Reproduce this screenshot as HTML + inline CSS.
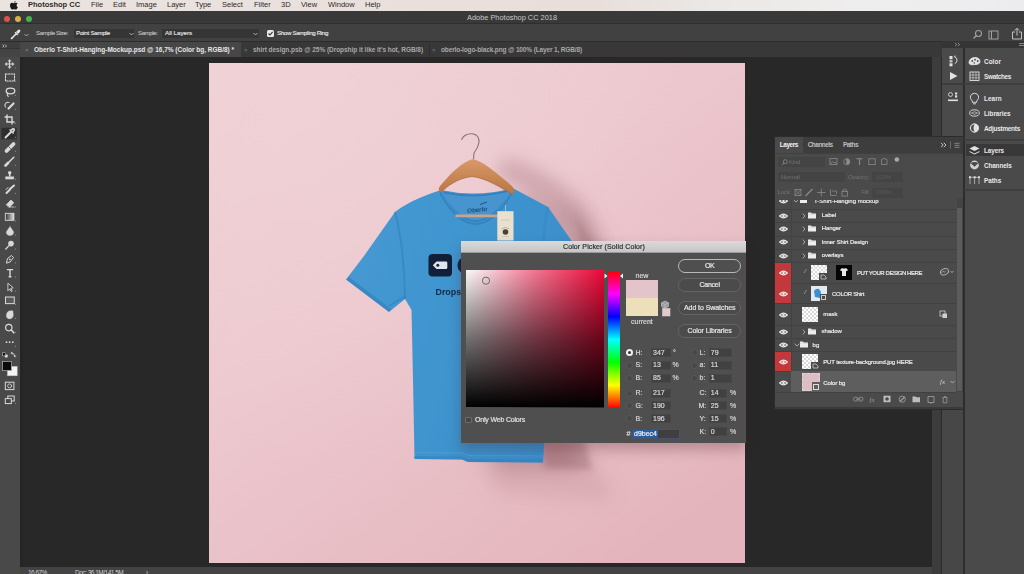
<!DOCTYPE html>
<html><head><meta charset="utf-8">
<style>
*{box-sizing:border-box}
html,body{margin:0;padding:0}
body{width:1024px;height:574px;overflow:hidden;position:relative;background:#282828;font-family:"Liberation Sans",sans-serif;color:#ddd}
.a{position:absolute}
.t{position:absolute;white-space:nowrap;line-height:1}
.dlg .t{-webkit-text-stroke:0.2px currentColor}
#menubar{left:0;top:0;width:1024px;height:11px;background:linear-gradient(90deg,#ebe3df 0%,#e8dfdb 58%,#ebe8e5 70%,#efeeee 84%,#ececee 100%)}
#menubar .t{color:#2a2a2a;font-size:7.5px;top:1px}
#titlebar{left:0;top:11px;width:1024px;height:12px;background:#393939}
#optbar{left:0;top:23px;width:1024px;height:18px;background:#414141;border-top:1px solid #2e2e2e}
#tabbar{left:20px;top:41px;width:1004px;height:16px;background:#383838;border-top:1px solid #2c2c2c}
#toolhead{left:0;top:41px;width:20px;height:16px;background:#3e3e3e;border-top:1px solid #2c2c2c}
#toolbar{left:0;top:57px;width:20px;height:517px;background:#494949}
#tbshadow{left:20px;top:57px;width:3px;height:510px;background:#252525}
#status{left:20px;top:567px;width:912px;height:7px;background:#434343}
#doc{left:209px;top:63px;width:536px;height:500px;background:linear-gradient(180deg,#eed2d6 0%,#eccdd2 40%,#e9c1c8 100%)}
#vstrip{left:932px;top:57px;width:10px;height:517px;background:#3c3c3c;border-right:1px solid #2a2a2a}
#dockcol{left:942px;top:48px;width:21px;height:526px;background:#474747}
#dockpanel{left:964px;top:48px;width:60px;height:526px;background:#4a4a4a;border-left:1px solid #2e2e2e}
#docktop{left:942px;top:41px;width:82px;height:7px;background:#353535}
</style></head>
<body>
<div id="menubar" class="a">
  <svg class="a" style="left:10px;top:1px" width="8" height="9" viewBox="0 0 8 9"><path d="M4 2.2 C3.3 2.2 2.8 1.8 2 1.8 C0.8 1.8 0 2.9 0 4.4 C0 6.4 1.3 8.6 2.3 8.6 C2.9 8.6 3.2 8.2 4 8.2 C4.8 8.2 5.1 8.6 5.7 8.6 C6.6 8.6 7.4 7.2 7.8 6.2 C6.9 5.8 6.5 4.9 6.6 4.1 C6.7 3.3 7.1 2.8 7.6 2.5 C7.1 1.9 6.4 1.8 6 1.8 C5.2 1.8 4.7 2.2 4 2.2 Z M4 1.8 C4 0.9 4.7 0.2 5.5 0 C5.6 0.9 4.9 1.7 4 1.8 Z" fill="#1a1a1a"/></svg>
  <div class="t" style="left:28px;font-weight:bold">Photoshop CC</div>
  <div class="t" style="left:91px">File</div>
  <div class="t" style="left:113px">Edit</div>
  <div class="t" style="left:136px">Image</div>
  <div class="t" style="left:167px">Layer</div>
  <div class="t" style="left:195px">Type</div>
  <div class="t" style="left:222px">Select</div>
  <div class="t" style="left:254px">Filter</div>
  <div class="t" style="left:281px">3D</div>
  <div class="t" style="left:301px">View</div>
  <div class="t" style="left:328px">Window</div>
  <div class="t" style="left:365px">Help</div>
</div>
<div id="titlebar" class="a">
  <div class="a" style="left:4px;top:4.5px;width:6px;height:6px;border-radius:50%;background:#d9534c"></div>
  <div class="a" style="left:15px;top:4.5px;width:6px;height:6px;border-radius:50%;background:#dcb246"></div>
  <div class="a" style="left:25.5px;top:4.5px;width:6px;height:6px;border-radius:50%;background:#43b54c"></div>
  <div class="t" style="left:467px;top:3px;font-size:7.4px;color:#c8c8c8">Adobe Photoshop CC 2018</div>
</div>
<div id="optbar" class="a">
  <svg class="a" style="left:10px;top:5px" width="11" height="11" viewBox="0 0 11 11"><path d="M1.5 9.5 L6.5 4.5" stroke="#e6e6e6" stroke-width="1.6" fill="none"/><path d="M1 10 L2.5 8.5" stroke="#e6e6e6" stroke-width="1.2"/><path d="M6 3 L8 1 Q9.5 0 10.3 1.5 Q10.5 2.5 9 4 L8 5 Z" fill="#e6e6e6"/><path d="M5 3.2 L7.8 6" stroke="#e6e6e6" stroke-width="1.2"/></svg>
  <svg class="a" style="left:24px;top:9px" width="5" height="4" viewBox="0 0 5 4"><path d="M0.5 1 L2.5 3 L4.5 1" stroke="#bbb" stroke-width="0.8" fill="none"/></svg>
  <div class="t" style="left:36px;top:5.5px;font-size:6.2px;color:#bdbdbd;letter-spacing:-0.377px;-webkit-text-stroke:0.15px #bdbdbd">Sample Size:</div>
  <div class="a" style="left:74px;top:5px;width:60px;height:9px;background:#353535"></div>
  <div class="t" style="left:76px;top:5.5px;font-size:6.2px;color:#e6e6e6;letter-spacing:-0.24px;-webkit-text-stroke:0.15px #e6e6e6">Point Sample</div>
  <svg class="a" style="left:129px;top:8px" width="5" height="4" viewBox="0 0 5 4"><path d="M0.5 1 L2.5 3 L4.5 1" stroke="#ccc" stroke-width="0.8" fill="none"/></svg>
  <div class="t" style="left:138px;top:5.5px;font-size:6.2px;color:#bdbdbd;letter-spacing:-0.5px;-webkit-text-stroke:0.15px #bdbdbd">Sample:</div>
  <div class="a" style="left:162px;top:5px;width:97px;height:9px;background:#353535"></div>
  <div class="t" style="left:165px;top:5.5px;font-size:6.2px;color:#e6e6e6;-webkit-text-stroke:0.15px #e6e6e6">All Layers</div>
  <svg class="a" style="left:253px;top:8px" width="5" height="4" viewBox="0 0 5 4"><path d="M0.5 1 L2.5 3 L4.5 1" stroke="#ccc" stroke-width="0.8" fill="none"/></svg>
  <div class="a" style="left:267px;top:6px;width:7px;height:7px;background:#e8e8e8;border-radius:1.5px"></div>
  <svg class="a" style="left:267px;top:6px" width="7" height="7" viewBox="0 0 7 7"><path d="M1.5 3.5 L3 5 L5.6 1.8" stroke="#333" stroke-width="1.1" fill="none"/></svg>
  <div class="t" style="left:277px;top:5.5px;font-size:6.2px;color:#e6e6e6;letter-spacing:-0.36px;-webkit-text-stroke:0.15px #e6e6e6">Show Sampling Ring</div>
  <svg class="a" style="left:972px;top:5px" width="11" height="11" viewBox="0 0 11 11"><circle cx="6.5" cy="4.5" r="3" stroke="#a0a0a0" stroke-width="1.1" fill="none"/><path d="M4.3 6.7 L1.5 9.5" stroke="#a0a0a0" stroke-width="1.3"/></svg>
  <svg class="a" style="left:988px;top:6px" width="11" height="10" viewBox="0 0 11 10"><rect x="1" y="1" width="9" height="8" stroke="#a0a0a0" stroke-width="1" fill="none"/><path d="M3.5 1 V9" stroke="#a0a0a0" stroke-width="1"/></svg>
  <svg class="a" style="left:1011px;top:3px" width="12" height="13" viewBox="0 0 12 13"><path d="M4 5 H1.5 V12 H10.5 V5 H8" stroke="#c0c0c0" stroke-width="1" fill="none"/><path d="M6 8.5 V1.5 M3.8 3.5 L6 1.2 L8.2 3.5" stroke="#c0c0c0" stroke-width="1" fill="none"/></svg>
</div>
<div id="toolhead" class="a"><div class="a" style="left:0;top:6px;width:20px;height:10px;background:#444"></div><div class="a" style="left:0;top:5.5px;width:20px;height:0.8px;background:#333"></div><svg class="a" style="left:1.5px;top:1.5px" width="6" height="4" viewBox="0 0 6 4"><path d="M0.6 0.5 L2 2 L0.6 3.5 M3 0.5 L4.4 2 L3 3.5" stroke="#d0d0d0" stroke-width="0.8" fill="none"/></svg></div>
<div id="tabbar" class="a">
  <div class="a" style="left:0;top:0;width:220.5px;height:15px;background:#474747"></div>
  <div class="t" style="left:5px;top:4.5px;font-size:6px;color:#888">&#215;</div>
  <div class="t" style="left:14px;top:4.5px;font-size:6.5px;font-weight:bold;color:#e8e8e8;letter-spacing:-0.01px">Oberlo T-Shirt-Hanging-Mockup.psd @ 16,7% (Color bg, RGB/8) *</div>
  <div class="t" style="left:224px;top:4.5px;font-size:6px;color:#777">&#215;</div>
  <div class="t" style="left:233px;top:4.5px;font-size:6.5px;color:#a8a8a8;font-weight:bold;letter-spacing:-0.045px">shirt design.psb @ 25% (Dropship it like it's hot, RGB/8)</div>
  <div class="a" style="left:409px;top:2px;width:1px;height:11px;background:#2d2d2d"></div>
  <div class="t" style="left:412px;top:4.5px;font-size:6px;color:#777">&#215;</div>
  <div class="t" style="left:421px;top:4.5px;font-size:6.5px;color:#a8a8a8;font-weight:bold;letter-spacing:-0.138px">oberlo-logo-black.png @ 100% (Layer 1, RGB/8)</div>
</div>
<div id="toolbar" class="a"></div>
<svg class="a" style="left:0;top:0" width="24" height="420" viewBox="0 0 24 420">
<g stroke="#d9d9d9" fill="none" stroke-width="1.1" stroke-linecap="round">
 <path d="M6 64 H13 M9.5 60.5 V67.5" stroke-width="1.2"/>
 <path d="M5 64 L6.8 62.6 V65.4Z M14 64 L12.2 62.6 V65.4Z M9.5 59.5 L8.1 61.3 H10.9Z M9.5 68.5 L8.1 66.7 H10.9Z" fill="#d9d9d9" stroke-width="0.4"/>
 <rect x="5.5" y="74" width="9" height="7" stroke-dasharray="1.6 1.2"/>
 <ellipse cx="10.5" cy="91" rx="4.3" ry="2.8" stroke-width="1.3"/>
 <path d="M7.5 93 Q6.5 95 8.3 96.5" stroke-width="1.1"/>
 <path d="M5.5 107 A3 3 0 0 1 9 102.5" stroke-dasharray="1 0.8"/>
 <path d="M8.5 108.5 L13.5 103.5" stroke-width="2.2"/>
 <path d="M7 114.5 V122 H14.5 M4.5 117 H12 V124.5" stroke-width="1.4" stroke-linecap="butt"/>
</g>
<rect x="1.5" y="127.8" width="15.2" height="11.5" fill="#2e2e2e"/>
<g stroke="#d9d9d9" fill="none" stroke-linecap="round">
 <path d="M5.5 137.5 L11.5 131.5" stroke-width="2"/>
 <path d="M11 130 L13 128.8 Q14.3 128.6 14.3 129.9 L13 132" stroke-width="1.6"/>
 <path d="M9.8 129.8 L13.3 133.3" stroke-width="1.2"/>
 <path d="M6.5 151 L13.5 144" stroke-width="3.8"/>
 <path d="M8.5 146.5 L11 149" stroke="#474747" stroke-width="0.7"/>
 <path d="M6 165 L13.8 157.2" stroke-width="1.5"/>
 <path d="M5.5 165.5 L8 163" stroke-width="2.6"/>
 <circle cx="9.7" cy="172.8" r="1.7" fill="#d9d9d9" stroke="none"/>
 <path d="M9.7 174 V176" stroke-width="1.6"/>
 <path d="M5.8 176.8 H13.7 V179 H5.8Z" fill="#d9d9d9" stroke-width="0.6"/>
 <path d="M6.5 193 L10 189.5 M10 189 L14 185.5" stroke-width="2"/>
 <path d="M6 189.5 L8 187.5" stroke-width="1"/>
 <path d="M6.5 204.5 L11 200 L13.8 202.8 L9.3 207.3Z" fill="#d9d9d9" stroke-width="0.8"/>
 <path d="M10 207 H14" stroke-width="0.8"/>
</g>
<defs><linearGradient id="gt" x1="0" x2="1"><stop offset="0" stop-color="#333"/><stop offset="1" stop-color="#e0e0e0"/></linearGradient></defs>
<rect x="5.3" y="213.3" width="8.6" height="7" fill="url(#gt)" stroke="#d9d9d9" stroke-width="0.9"/>
<g stroke="#d9d9d9" fill="none" stroke-linecap="round">
 <path d="M10 226.8 Q13.6 231.3 13.6 232.3 A3.6 3.1 0 0 1 6.4 232.3 Q6.4 231.3 10 226.8Z" fill="#d9d9d9" stroke-width="0.5"/>
 <circle cx="11" cy="243.6" r="2.8" fill="#d9d9d9" stroke="none"/>
 <path d="M9 245.6 L5.8 249" stroke-width="1.3"/>
 <path d="M6.5 262.8 L7.5 258.5 L11.5 255.5 L13.5 257.5 L10.5 261.5Z" stroke-width="1"/>
 <circle cx="9.8" cy="259.3" r="0.9" fill="#d9d9d9" stroke="none"/>
 <path d="M6.8 269.6 H13.2 M10 269.6 V276.8 M8.6 276.8 H11.4" stroke-width="1.4" stroke-linecap="butt"/>
 <path d="M8.2 283.5 L13.2 287.8 L10.8 288.3 L12.2 291 L11.2 291.5 L9.8 288.8 L8.2 290.5Z" fill="#3a3a3a" stroke-width="0.9"/>
 <rect x="5.5" y="297" width="8.8" height="6.6" fill="#5a5a5a" stroke-width="1"/>
 <path d="M6.5 317 Q6 313 8.5 311.3 Q10 310.3 11 311 L12 310.5 Q13.6 311 13 312.8 Q14 315 12.5 317.5 Q10.5 319.5 8 318.6Z" fill="#d9d9d9" stroke-width="0.4"/>
 <circle cx="8.8" cy="327.6" r="3.2" stroke-width="1.2"/>
 <path d="M11.2 330 L13.8 332.8" stroke-width="1.6"/>
 <circle cx="6.5" cy="342.2" r="0.9" fill="#d9d9d9" stroke="none"/>
 <circle cx="9.6" cy="342.2" r="0.9" fill="#d9d9d9" stroke="none"/>
 <circle cx="12.8" cy="342.2" r="0.9" fill="#d9d9d9" stroke="none"/>
 <rect x="4.8" y="354.6" width="2.8" height="2.8" fill="#e8e8e8" stroke="none"/>
 <rect x="2.6" y="352.8" width="3" height="3" fill="#111" stroke="#ccc" stroke-width="0.5"/>
 <path d="M11.5 353 Q14.8 353 14.8 356.3" stroke-width="0.8"/>
 <path d="M11 353 L12.3 352 V354Z M14.8 357 L13.8 355.7 H15.8Z" fill="#d9d9d9" stroke-width="0.3"/>
 <rect x="7.4" y="366.4" width="9.8" height="9.4" fill="#f4f4f4" stroke="#bbb" stroke-width="0.5"/>
 <rect x="2.6" y="361.4" width="9" height="9.2" fill="#0a0a0a" stroke="#c8c8c8" stroke-width="0.6"/>
 <rect x="5.3" y="382.2" width="8.6" height="7.4" stroke-width="1"/>
 <circle cx="9.6" cy="385.9" r="2" stroke-width="0.8"/>
 <rect x="7.8" y="396" width="6.4" height="5" stroke-width="1"/>
 <rect x="5.3" y="398.6" width="6" height="5" fill="#474747" stroke-width="1"/>
</g>
<g fill="#8a8a8a">
 <path d="M16 68.5 L14.5 68.5 L16 67Z M16 82 L14.5 82 L16 80.5Z M16 96 L14.5 96 L16 94.5Z M16 110 L14.5 110 L16 108.5Z M16 124 L14.5 124 L16 122.5Z M16 138 L14.5 138 L16 136.5Z M16 152 L14.5 152 L16 150.5Z M16 166 L14.5 166 L16 164.5Z M16 180 L14.5 180 L16 178.5Z M16 194 L14.5 194 L16 192.5Z M16 207.5 L14.5 207.5 L16 206Z M16 221.5 L14.5 221.5 L16 220Z M16 235.5 L14.5 235.5 L16 234Z M16 249.5 L14.5 249.5 L16 248Z M16 263.5 L14.5 263.5 L16 262Z M16 277.5 L14.5 277.5 L16 276Z M16 291.5 L14.5 291.5 L16 290Z M16 305 L14.5 305 L16 303.5Z M16 319 L14.5 319 L16 317.5Z M16 333 L14.5 333 L16 331.5Z M16 347 L14.5 347 L16 345.5Z M16 404 L14.5 404 L16 402.5Z"/>
</g>
</svg>
<div id="tbshadow" class="a"></div>
<div id="status" class="a"></div>
<div class="a" style="left:20px;top:567px;width:912px;height:7px;overflow:hidden">
 <div class="t" style="left:8px;top:3.3px;font-size:6.5px;color:#d0d0d0;letter-spacing:-0.55px">16,67%</div>
 <div class="t" style="left:55px;top:3.3px;font-size:6.5px;color:#d0d0d0;letter-spacing:-0.5px">Doc: 36,1M/141,5M</div>
 <div class="t" style="left:126px;top:3.3px;font-size:6.5px;color:#d0d0d0">&#8250;</div>
</div>
<div id="doc" class="a"></div>
<svg class="a" style="left:209px;top:63px" width="536" height="500" viewBox="209 63 536 500">
<defs>
 <linearGradient id="pk" x1="0" y1="0" x2="0.8" y2="1">
  <stop offset="0" stop-color="#efd0d5"/>
  <stop offset="0.45" stop-color="#ecc8ce"/>
  <stop offset="1" stop-color="#e4b4bc"/>
 </linearGradient>
 <radialGradient id="pkhl" cx="0.2" cy="0.1" r="0.7">
  <stop offset="0" stop-color="#f0d5d9" stop-opacity="0.5"/>
  <stop offset="1" stop-color="#f0d5d9" stop-opacity="0"/>
 </radialGradient>
 <filter id="blur8" x="-50%" y="-50%" width="200%" height="200%"><feGaussianBlur stdDeviation="9"/></filter>
 <filter id="blur3" x="-50%" y="-50%" width="200%" height="200%"><feGaussianBlur stdDeviation="3"/></filter>
 <filter id="blur1" x="-20%" y="-20%" width="140%" height="140%"><feGaussianBlur stdDeviation="0.6"/></filter>
 <linearGradient id="shirtg" x1="0" y1="0" x2="1" y2="0.3">
  <stop offset="0" stop-color="#4699d3"/>
  <stop offset="0.5" stop-color="#4095cf"/>
  <stop offset="1" stop-color="#398dca"/>
 </linearGradient>
 <linearGradient id="woodg" x1="0" y1="0" x2="0" y2="1">
  <stop offset="0" stop-color="#d9996a"/>
  <stop offset="1" stop-color="#b97542"/>
 </linearGradient>
</defs>
<rect x="209" y="63" width="536" height="500" fill="url(#pk)"/>
<rect x="209" y="63" width="536" height="500" fill="url(#pkhl)"/>
<!-- shadows -->
<g filter="url(#blur8)" fill="#a06e77">
 <path d="M525 192 L578 212 L615 285 L600 320 L578 320 L576 470 L500 472 L440 300 Z" opacity="0.42"/>
 <path d="M470 455 L590 450 L615 500 L500 495 Z" opacity="0.18"/>
</g>
<g filter="url(#blur8)">
 <path d="M500 168 Q545 180 575 212 Q598 240 606 300" stroke="#a06e77" stroke-width="22" fill="none" opacity="0.4"/>
</g>
<g filter="url(#blur3)" fill="#8c5a64">
 <path d="M540 440 L585 440 L592 470 L545 468 Z" opacity="0.35"/>
 <path d="M575 215 L600 250 L612 290 L590 300 Z" opacity="0.25"/>
</g>
<!-- shirt -->
<g filter="url(#blur1)">
<path d="M441 190 Q410 200 395 212 Q378 236 364 256 L346 279.5 L389 312 L405 299 L411.5 310 L413 380 L414.5 459 L462 459.5 L468 462 L543 462.5 L547 400 L560 300 L600 290 L571 240 L548 207 L512.6 188 Q477 198 441 190 Z" fill="url(#shirtg)"/>
<path d="M443 191.5 Q477 199 511 189.5 L511 193 Q476 250 443 195Z" fill="#4794cf"/>
<path d="M444 192.5 Q477 199.5 510 190.5" stroke="#2f7fbd" stroke-width="1.4" fill="none"/>
<path d="M440.5 191 Q476 250 512.5 189 L513 193 Q476 256 440 195Z" fill="#3383c0"/>
<path d="M442 194.5 Q476 252 511 192.5" stroke="#5aa5da" stroke-width="0.6" fill="none" opacity="0.7"/>
<path d="M346 279.5 L389 312 L391 309 L349 277Z" fill="#2a76b1" opacity="0.45"/>
<path d="M414.5 459 L462 459.5 L468 462 L543 462.5 L543 459.5 L468 459 L462 456.5 L414.5 456Z" fill="#2f7fbd" opacity="0.5"/>
<path d="M415 452.5 L462 453 L468 455.5 L543 456" stroke="#5aa6dc" stroke-width="0.8" fill="none" opacity="0.6"/>
<path d="M395 212 Q404 245 405 299" stroke="#3080bd" stroke-width="2" fill="none" opacity="0.55"/>
<path d="M389 306 Q398 300 406 296" stroke="#2f7ebb" stroke-width="1.5" fill="none" opacity="0.6"/>
<path d="M548 207 Q540 240 545 300" stroke="#3384c2" stroke-width="3" fill="none" opacity="0.35"/>
</g>
<!-- inner neck label + hanger bar -->
<path d="M455.5 215.9 L497.5 215.9" stroke="#c9a38c" stroke-width="2.6"/>
<text x="467" y="212" font-family="Liberation Sans" font-style="italic" font-weight="bold" font-size="6.2" fill="#1d4c78" transform="rotate(-6 476 209)">Oberlo</text>
<path d="M480 204.5 Q484 203 487 202" stroke="#1d4c78" stroke-width="0.9" fill="none"/>
<!-- hanger -->
<path d="M461.5 139.8 Q464 133.5 472.5 133.8 Q479.5 135 479 142.5 Q478 148 474 153 L473.5 159" stroke="#847670" stroke-width="1.1" fill="none"/>
<path d="M440 186 C452 172 462 162 473 159 C484 162 495 172 512 186 Q516 191 512.6 194.5 C500 187 486 178 472 176.5 C458 178 447 186 441 192.5 Q437 190 440 186Z" fill="url(#woodg)"/>
<path d="M441 192.5 C447 186 458 178 472 176.5 C486 178 500 187 512.6 194.5" stroke="#a5653a" stroke-width="1" fill="none" opacity="0.7"/>
<!-- tag -->
<path d="M505.5 205 L505.5 212" stroke="#e0e0e0" stroke-width="0.5"/>
<rect x="497.3" y="211.2" width="16.2" height="29.3" fill="#e9e1cd"/>
<circle cx="505.5" cy="232" r="2.8" fill="#4a4038"/>
<path d="M501.5 229 Q505.5 226 509.5 229" stroke="#9a8f80" stroke-width="0.6" fill="none"/>
<path d="M501 220 H510 M502 236.5 H509" stroke="#c4b9a6" stroke-width="0.6"/>
<!-- logo -->
<rect x="428.5" y="254" width="23.5" height="22.5" rx="4" fill="#111f38"/>
<path d="M446 261.5 H436.5 L432.8 265.3 L436.5 269 H446 Q447.3 269 447.3 267.7 V262.8 Q447.3 261.5 446 261.5Z" fill="#dfe6ee"/>
<circle cx="437.8" cy="265.3" r="1.5" fill="#12233f"/>
<circle cx="466" cy="265.3" r="8.5" fill="#12233f"/>
<text x="435.5" y="295.3" font-family="Liberation Sans" font-weight="bold" font-size="8.9" fill="#12284a">Drops</text>
</svg>
<div id="vstrip" class="a"></div>
<div id="docktop" class="a"></div>
<div id="dockcol" class="a"></div>
<div id="dockpanel" class="a"></div>
<div class="a" style="left:942px;top:41px;width:82px;height:7px;background:#353535"></div><svg class="a" style="left:954px;top:42px" width="7" height="5" viewBox="0 0 7 5"><path d="M1 0.8 L2.8 2.5 L1 4.2 M3.8 0.8 L5.6 2.5 L3.8 4.2" stroke="#aaa" stroke-width="0.7" fill="none"/></svg><div class="a" style="left:1019px;top:43px;width:5px;height:3px;border-top:1px solid #888;border-bottom:1px solid #888"></div><div class="a" style="left:942px;top:48px;width:21px;height:35px;background:#4a4a4a"></div><div class="a" style="left:942px;top:83px;width:21px;height:2px;background:#3c3c3c"></div><div class="a" style="left:942px;top:85px;width:21px;height:51px;background:#4a4a4a"></div><svg class="a" style="left:942px;top:48px" width="21" height="60" viewBox="942 48 21 60">
<g fill="#e2e2e2">
<rect x="949.5" y="56" width="3" height="3.2"/><rect x="949.5" y="60" width="3" height="2.5" fill="#bdbdbd"/><rect x="949.5" y="63.3" width="3" height="3"/>
<path d="M954.5 57 Q957.5 57.5 957 61 Q956.5 63 954.8 63.5" fill="none" stroke="#e2e2e2" stroke-width="0.9"/>
<path d="M954 56 L955.8 55.5 L955 57.5Z"/>
<path d="M950 72 L957.5 76 L950 80Z"/>
<circle cx="950.5" cy="94.5" r="2" fill="none" stroke="#e2e2e2" stroke-width="0.8"/>
<rect x="955" y="92.5" width="2.2" height="2"/><rect x="955" y="95.3" width="2.2" height="2.2"/>
<rect x="948" y="99.5" width="10" height="1.6"/>
</g></svg><div class="a" style="left:963px;top:48px;width:1px;height:526px;background:#2e2e2e"></div><div class="a" style="left:964px;top:83.2px;width:60px;height:1.5px;background:#3e3e3e"></div><div class="a" style="left:964px;top:139.3px;width:60px;height:1.5px;background:#3e3e3e"></div><div class="a" style="left:964px;top:189.3px;width:60px;height:1.5px;background:#3e3e3e"></div><div class="a" style="left:966px;top:144px;width:58px;height:11.5px;background:#383838"></div><div class="t" style="left:984px;top:58.7px;font-size:6.4px;font-weight:bold;color:#e8e8e8;letter-spacing:0.05px">Color</div><div class="t" style="left:984px;top:73.7px;font-size:6.4px;font-weight:bold;color:#e8e8e8;letter-spacing:-0.30px">Swatches</div><div class="t" style="left:984px;top:95.7px;font-size:6.4px;font-weight:bold;color:#e8e8e8;letter-spacing:0.05px">Learn</div><div class="t" style="left:984px;top:110.7px;font-size:6.4px;font-weight:bold;color:#e8e8e8;letter-spacing:-0.05px">Libraries</div><div class="t" style="left:984px;top:125.7px;font-size:6.4px;font-weight:bold;color:#e8e8e8;letter-spacing:-0.25px">Adjustments</div><div class="t" style="left:984px;top:147.7px;font-size:6.4px;font-weight:bold;color:#e8e8e8;letter-spacing:-0.10px">Layers</div><div class="t" style="left:984px;top:162.7px;font-size:6.4px;font-weight:bold;color:#e8e8e8;letter-spacing:-0.15px">Channels</div><div class="t" style="left:984px;top:177.7px;font-size:6.4px;font-weight:bold;color:#e8e8e8;letter-spacing:-0.05px">Paths</div><svg class="a" style="left:964px;top:48px" width="20" height="140" viewBox="964 48 20 140">
<g fill="none" stroke="#e2e2e2" stroke-width="0.9">
<path d="M969 62.5 Q969.5 58 974.5 57.5 Q979.8 57.5 980 61.5 Q980 64.5 975 64.5 Q969 65.5 969 62.5Z" fill="#e2e2e2"/>
<circle cx="972.3" cy="61" r="0.9" fill="#4a4a4a" stroke="none"/><circle cx="975" cy="59.7" r="0.9" fill="#4a4a4a" stroke="none"/><circle cx="977.7" cy="61" r="0.9" fill="#4a4a4a" stroke="none"/><circle cx="974.3" cy="63" r="0.8" fill="#4a4a4a" stroke="none"/>
<rect x="970" y="72" width="9" height="8.5"/><path d="M973 72 V80.5 M976 72 V80.5 M970 75 H979 M970 77.8 H979" stroke-width="0.6"/>
<path d="M972.3 101 Q969.8 98.8 970.5 96 Q971.5 93.3 974.5 93.3 Q977.5 93.3 978.5 96 Q979.2 98.8 976.7 101 V102.3 H972.3Z"/><path d="M973 103.8 H976" />
<ellipse cx="974.5" cy="113" rx="4.8" ry="3.2"/><path d="M971.5 113 Q974.5 110.5 977.5 113 Q974.5 115.5 971.5 113" stroke-width="0.6"/>
<circle cx="974.5" cy="128" r="4.2" fill="#e2e2e2"/>
</g>
<path d="M974.5 124.5 A3.5 3.5 0 0 0 974.5 131.5 Q972.5 128 974.5 124.5Z" fill="#4a4a4a"/>
<g fill="#e2e2e2">
<path d="M969.5 148.5 L974.5 146 L979.5 148.5 L974.5 151Z"/>
<path d="M969.5 151 L974.5 153.5 L979.5 151 L979.5 152 L974.5 154.5 L969.5 152Z"/>
<circle cx="974.5" cy="165" r="4.4" fill="#cfcfcf"/>
<path d="M970.5 163 L974.5 166.8 L978.5 163 Q974.5 161 970.5 163Z" fill="#4a4a4a"/>
<rect x="969" y="176.3" width="2" height="2"/><rect x="973.6" y="176.3" width="2" height="2"/><rect x="978" y="176.3" width="2" height="2"/>
<path d="M970 178.3 L970 184 M974.6 178.3 L974.6 184 M979 178.3 L979 184 M971 177.3 H978" stroke="#e2e2e2" stroke-width="0.6"/>
</g></svg>
<!--LAYERS-->
<div class="a" style="left:0;top:0;width:1024px;height:574px"><div class="a" style="left:775px;top:136.5px;width:188px;height:272px;background:#4a4a4a;box-shadow:0 0 0 1px #2c2c2c"></div><div class="a" style="left:775px;top:136.5px;width:188px;height:16px;background:#3d3d3d"></div><div class="a" style="left:775px;top:136.5px;width:28px;height:16px;background:#4a4a4a"></div><div class="t" style="left:779.8px;top:141.8px;font-size:6.5px;font-weight:bold;color:#f0f0f0;letter-spacing:-0.49px">Layers</div><div class="t" style="left:807.7px;top:141.8px;font-size:6.5px;font-weight:bold;color:#bdbdbd;letter-spacing:-0.53px">Channels</div><div class="t" style="left:843px;top:141.8px;font-size:6.5px;font-weight:bold;color:#bdbdbd;letter-spacing:-0.54px">Paths</div><svg class="a" style="left:939px;top:141px" width="22" height="8" viewBox="0 0 22 8"><path d="M2 1.8 L4.2 4 L2 6.2 M4.8 1.8 L7 4 L4.8 6.2" stroke="#cfcfcf" stroke-width="0.9" fill="none"/><path d="M11.5 0.5 V7.5" stroke="#8a8a8a" stroke-width="0.6"/><path d="M15.5 2.3 H20.5 M15.5 4.3 H20.5 M15.5 6.3 H20.5" stroke="#b0b0b0" stroke-width="0.6"/></svg><div class="a" style="left:778px;top:157px;width:47px;height:10px;background:#444"></div><svg class="a" style="left:781px;top:158.5px" width="7" height="7" viewBox="0 0 7 7"><circle cx="4.3" cy="2.7" r="2" fill="none" stroke="#8a8a8a" stroke-width="0.8"/><path d="M3 4 L1 6" stroke="#8a8a8a" stroke-width="0.9"/></svg><div class="t" style="left:789px;top:158.7px;font-size:6px;color:#727272;letter-spacing:-0.25px;">Kind</div><svg class="a" style="left:828px;top:156px" width="74" height="12" viewBox="828 156 74 12">
<g stroke="#8a8a8a" fill="none" stroke-width="0.8">
<rect x="830" y="158.5" width="7" height="6"/><path d="M830.5 164 L832.5 161.5 L834 163 L835 162 L836.5 164" />
<circle cx="846.7" cy="161.7" r="3"/><path d="M846.7 158.7 A3 3 0 0 1 846.7 164.7Z" fill="#8a8a8a"/>
<path d="M856.5 158.7 H862.5 M859.5 158.7 V165" stroke-width="1.1"/>
<rect x="868.8" y="158.8" width="6.4" height="5.8"/>
<path d="M881.5 164.5 V159.5 L884 158.5 L887 159.5 V164.5Z"/>
</g>
<circle cx="896.9" cy="159.5" r="2.3" fill="#a8a8a8"/>
</svg><div class="a" style="left:778px;top:172px;width:67px;height:10px;background:#444"></div><div class="t" style="left:780.7px;top:173.7px;font-size:6px;color:#727272;letter-spacing:-0.05px;">Normal</div><div class="t" style="left:848px;top:173.7px;font-size:6px;color:#727272;letter-spacing:-0.06px;">Opacity:</div><div class="a" style="left:871.5px;top:172px;width:31px;height:10px;background:#444"></div><div class="t" style="left:876px;top:173.7px;font-size:6px;color:#5a5a5a;letter-spacing:-0.1px;">100%</div><div class="t" style="left:777.5px;top:189.2px;font-size:6px;color:#727272;letter-spacing:-0.07px;">Lock:</div><svg class="a" style="left:793px;top:187px" width="58" height="11" viewBox="793 187 58 11">
<g stroke="#8a8a8a" fill="none" stroke-width="0.8">
<rect x="795" y="189.5" width="6" height="6"/><path d="M795 189.5 L801 195.5 M801 189.5 L795 195.5"/>
<path d="M805.5 196 L812.5 189" stroke-width="1.2"/>
<path d="M817 192.5 H825.5 M821.3 188.5 V196.5"/>
<path d="M830.5 189.5 V195.5 H836.5 M832 191 H836.5 V194"/>
<rect x="842" y="191.5" width="5.6" height="4.6"/><path d="M843 191.5 V190 Q844.8 188 846.6 190 V191.5"/>
</g></svg><div class="t" style="left:861.3px;top:189.2px;font-size:6px;color:#727272;letter-spacing:-0.27px;">Fill:</div><div class="a" style="left:871.5px;top:187.5px;width:31px;height:10px;background:#444"></div><div class="t" style="left:876px;top:189.2px;font-size:6px;color:#5a5a5a;letter-spacing:-0.1px;">100%</div><div class="a" style="left:775px;top:152.5px;width:188px;height:1px;background:#404040"></div><div class="a" style="left:775px;top:208.5px;width:181px;height:1px;background:#414141"></div><div class="a" style="left:775px;top:222px;width:181px;height:1px;background:#414141"></div><div class="a" style="left:775px;top:235.5px;width:181px;height:1px;background:#414141"></div><div class="a" style="left:775px;top:248.5px;width:181px;height:1px;background:#414141"></div><div class="a" style="left:775px;top:262px;width:181px;height:1px;background:#414141"></div><div class="a" style="left:775px;top:282.5px;width:181px;height:1px;background:#414141"></div><div class="a" style="left:775px;top:303px;width:181px;height:1px;background:#414141"></div><div class="a" style="left:775px;top:325px;width:181px;height:1px;background:#414141"></div><div class="a" style="left:775px;top:337.5px;width:181px;height:1px;background:#414141"></div><div class="a" style="left:775px;top:351px;width:181px;height:1px;background:#414141"></div><div class="a" style="left:775px;top:370.8px;width:181px;height:1px;background:#414141"></div><div class="a" style="left:775px;top:392px;width:181px;height:1px;background:#414141"></div><div class="a" style="left:790.5px;top:200px;width:1px;height:192px;background:#434343"></div><div class="a" style="left:775px;top:262.5px;width:15.5px;height:40.5px;background:#c3393b"></div><div class="a" style="left:775px;top:351.5px;width:15.5px;height:19.3px;background:#c3393b"></div><div class="a" style="left:791px;top:371.2px;width:165px;height:20.8px;background:#5e5e5e"></div><div class="a" style="left:775px;top:200px;width:181px;height:8.5px;overflow:hidden"><div class="a" style="left:-775px;top:-200px;width:1024px;height:574px"><svg class="a" style="left:779px;top:197.5px" width="9" height="6" viewBox="0 0 9 6"><path d="M0.7 3 Q4.5 -0.9 8.3 3 Q4.5 6.9 0.7 3Z" fill="none" stroke="#e8e8e8" stroke-width="1.2"/><circle cx="4.5" cy="3" r="1.25" fill="#e8e8e8"/></svg><svg class="a" style="left:792.5px;top:198.5px" width="6" height="4" viewBox="0 0 6 4"><path d="M0.6 0.8 L3 3 L5.4 0.8" fill="none" stroke="#c0c0c0" stroke-width="0.8"/></svg><div class="a" style="left:800px;top:199px;width:7px;height:4px;background:#ececec"></div><div class="t" style="left:814px;top:198.0px;font-size:6px;color:#ececec;letter-spacing:0px;-webkit-text-stroke:0.18px #ececec">T-Shirt-Hanging mockup</div></div></div><svg class="a" style="left:779px;top:212.5px" width="9" height="6" viewBox="0 0 9 6"><path d="M0.7 3 Q4.5 -0.9 8.3 3 Q4.5 6.9 0.7 3Z" fill="none" stroke="#e8e8e8" stroke-width="1.2"/><circle cx="4.5" cy="3" r="1.25" fill="#e8e8e8"/></svg><svg class="a" style="left:801.5px;top:212.5px" width="4" height="6" viewBox="0 0 4 6"><path d="M0.8 0.6 L3 3 L0.8 5.4" fill="none" stroke="#c0c0c0" stroke-width="0.8"/></svg><svg class="a" style="left:808px;top:212.0px" width="8" height="7" viewBox="0 0 8 7"><path d="M0 0.5 H3 L3.8 1.4 H8 V6.5 H0Z" fill="#ececec"/><path d="M0 2.2 H8" stroke="#c4c4c4" stroke-width="0.5"/></svg><div class="t" style="left:821.8px;top:212.2px;font-size:6px;color:#ececec;letter-spacing:-0.1px;-webkit-text-stroke:0.18px #ececec">Label</div><svg class="a" style="left:779px;top:225.7px" width="9" height="6" viewBox="0 0 9 6"><path d="M0.7 3 Q4.5 -0.9 8.3 3 Q4.5 6.9 0.7 3Z" fill="none" stroke="#e8e8e8" stroke-width="1.2"/><circle cx="4.5" cy="3" r="1.25" fill="#e8e8e8"/></svg><svg class="a" style="left:801.5px;top:225.7px" width="4" height="6" viewBox="0 0 4 6"><path d="M0.8 0.6 L3 3 L0.8 5.4" fill="none" stroke="#c0c0c0" stroke-width="0.8"/></svg><svg class="a" style="left:808px;top:225.2px" width="8" height="7" viewBox="0 0 8 7"><path d="M0 0.5 H3 L3.8 1.4 H8 V6.5 H0Z" fill="#ececec"/><path d="M0 2.2 H8" stroke="#c4c4c4" stroke-width="0.5"/></svg><div class="t" style="left:821.8px;top:225.39999999999998px;font-size:6px;color:#ececec;letter-spacing:-0.1px;-webkit-text-stroke:0.18px #ececec">Hanger</div><svg class="a" style="left:779px;top:239px" width="9" height="6" viewBox="0 0 9 6"><path d="M0.7 3 Q4.5 -0.9 8.3 3 Q4.5 6.9 0.7 3Z" fill="none" stroke="#e8e8e8" stroke-width="1.2"/><circle cx="4.5" cy="3" r="1.25" fill="#e8e8e8"/></svg><svg class="a" style="left:801.5px;top:239px" width="4" height="6" viewBox="0 0 4 6"><path d="M0.8 0.6 L3 3 L0.8 5.4" fill="none" stroke="#c0c0c0" stroke-width="0.8"/></svg><svg class="a" style="left:808px;top:238.5px" width="8" height="7" viewBox="0 0 8 7"><path d="M0 0.5 H3 L3.8 1.4 H8 V6.5 H0Z" fill="#ececec"/><path d="M0 2.2 H8" stroke="#c4c4c4" stroke-width="0.5"/></svg><div class="t" style="left:821.8px;top:238.7px;font-size:6px;color:#ececec;letter-spacing:-0.1px;-webkit-text-stroke:0.18px #ececec">Inner Shirt Design</div><svg class="a" style="left:779px;top:252.5px" width="9" height="6" viewBox="0 0 9 6"><path d="M0.7 3 Q4.5 -0.9 8.3 3 Q4.5 6.9 0.7 3Z" fill="none" stroke="#e8e8e8" stroke-width="1.2"/><circle cx="4.5" cy="3" r="1.25" fill="#e8e8e8"/></svg><svg class="a" style="left:801.5px;top:252.5px" width="4" height="6" viewBox="0 0 4 6"><path d="M0.8 0.6 L3 3 L0.8 5.4" fill="none" stroke="#c0c0c0" stroke-width="0.8"/></svg><svg class="a" style="left:808px;top:252.0px" width="8" height="7" viewBox="0 0 8 7"><path d="M0 0.5 H3 L3.8 1.4 H8 V6.5 H0Z" fill="#ececec"/><path d="M0 2.2 H8" stroke="#c4c4c4" stroke-width="0.5"/></svg><div class="t" style="left:821.8px;top:252.2px;font-size:6px;color:#ececec;letter-spacing:-0.1px;-webkit-text-stroke:0.18px #ececec">overlays</div><svg class="a" style="left:779px;top:269.5px" width="9" height="6" viewBox="0 0 9 6"><path d="M0.7 3 Q4.5 -0.9 8.3 3 Q4.5 6.9 0.7 3Z" fill="none" stroke="#e8e8e8" stroke-width="1.2"/><circle cx="4.5" cy="3" r="1.25" fill="#e8e8e8"/></svg><div class="t" style="left:805px;top:268.2px;font-size:6px;color:#cfcfcf;letter-spacing:0px;">&#8260;</div><div class="a" style="left:811px;top:264.5px;width:16px;height:15.5px;background-color:#fff;background-image:linear-gradient(45deg,#d9d9d9 25%,transparent 25%,transparent 75%,#d9d9d9 75%),linear-gradient(45deg,#d9d9d9 25%,transparent 25%,transparent 75%,#d9d9d9 75%);background-size:4px 4px;background-position:0 0,2px 2px"></div><div class="a" style="left:819px;top:273px;width:8px;height:7px;background:#4a4a4a"></div><svg class="a" style="left:819.5px;top:273px" width="7" height="7" viewBox="0 0 7 7"><path d="M1 6 V2 H4 L6 4 V6Z" fill="none" stroke="#ddd" stroke-width="0.7"/></svg><div class="a" style="left:836px;top:264.5px;width:16px;height:15.5px;background:#050505"></div><svg class="a" style="left:839px;top:267px" width="10" height="10" viewBox="0 0 10 10"><path d="M3 1 L1 3 L2.3 4.3 L3 3.8 V9 H7 V3.8 L7.7 4.3 L9 3 L7 1 Q5 2.2 3 1Z" fill="#e8e8e8"/></svg><div class="t" style="left:857px;top:269.7px;font-size:6px;color:#ececec;letter-spacing:-0.44px;-webkit-text-stroke:0.18px #ececec">PUT YOUR DESIGN HERE</div><svg class="a" style="left:939px;top:268px" width="16" height="8" viewBox="0 0 16 8"><ellipse cx="5.5" cy="3.8" rx="4.3" ry="3" fill="none" stroke="#bdbdbd" stroke-width="0.9" transform="rotate(-20 5.5 3.8)"/><path d="M2.5 5 L4 3.2 L5.5 4.3 L7 2.5" stroke="#bdbdbd" stroke-width="0.6" fill="none"/><path d="M11.5 3 L13 4.6 L14.5 3" stroke="#bdbdbd" stroke-width="0.8" fill="none"/></svg><svg class="a" style="left:779px;top:290.5px" width="9" height="6" viewBox="0 0 9 6"><path d="M0.7 3 Q4.5 -0.9 8.3 3 Q4.5 6.9 0.7 3Z" fill="none" stroke="#e8e8e8" stroke-width="1.2"/><circle cx="4.5" cy="3" r="1.25" fill="#e8e8e8"/></svg><div class="t" style="left:805px;top:289.2px;font-size:6px;color:#cfcfcf;letter-spacing:0px;">&#8260;</div><div class="a" style="left:811px;top:285.5px;width:16px;height:15.5px;background:#dfeaf2"></div><svg class="a" style="left:811px;top:285.5px" width="16" height="15.5" viewBox="0 0 16 15.5"><path d="M3 5 Q5 2 8 3 L10 6 L9 12 L4 11 Z" fill="#3d8fcb"/></svg><div class="a" style="left:820px;top:294px;width:7px;height:7px;background:#4a4a4a"></div><div class="a" style="left:821px;top:295px;width:5px;height:5px;border:0.8px solid #ccc"></div><div class="t" style="left:832px;top:290.7px;font-size:6px;color:#ececec;letter-spacing:-0.3px;-webkit-text-stroke:0.18px #ececec">COLOR Shirt</div><svg class="a" style="left:779px;top:311.5px" width="9" height="6" viewBox="0 0 9 6"><path d="M0.7 3 Q4.5 -0.9 8.3 3 Q4.5 6.9 0.7 3Z" fill="none" stroke="#e8e8e8" stroke-width="1.2"/><circle cx="4.5" cy="3" r="1.25" fill="#e8e8e8"/></svg><div class="a" style="left:802.4px;top:306.5px;width:16px;height:15px;background-color:#fff;background-image:linear-gradient(45deg,#d9d9d9 25%,transparent 25%,transparent 75%,#d9d9d9 75%),linear-gradient(45deg,#d9d9d9 25%,transparent 25%,transparent 75%,#d9d9d9 75%);background-size:4px 4px;background-position:0 0,2px 2px"></div><div class="t" style="left:823.2px;top:311.2px;font-size:6px;color:#ececec;letter-spacing:0px;-webkit-text-stroke:0.18px #ececec">mask</div><svg class="a" style="left:939px;top:310px" width="9" height="9" viewBox="0 0 9 9"><rect x="1" y="1" width="5" height="5" fill="none" stroke="#cfcfcf" stroke-width="0.8"/><rect x="3.5" y="3.5" width="4.5" height="4.5" fill="#cfcfcf"/></svg><svg class="a" style="left:779px;top:328.5px" width="9" height="6" viewBox="0 0 9 6"><path d="M0.7 3 Q4.5 -0.9 8.3 3 Q4.5 6.9 0.7 3Z" fill="none" stroke="#e8e8e8" stroke-width="1.2"/><circle cx="4.5" cy="3" r="1.25" fill="#e8e8e8"/></svg><svg class="a" style="left:802px;top:328.5px" width="4" height="6" viewBox="0 0 4 6"><path d="M0.8 0.6 L3 3 L0.8 5.4" fill="none" stroke="#c0c0c0" stroke-width="0.8"/></svg><svg class="a" style="left:808.4px;top:327.5px" width="8" height="7" viewBox="0 0 8 7"><path d="M0 0.5 H3 L3.8 1.4 H8 V6.5 H0Z" fill="#ececec"/><path d="M0 2.2 H8" stroke="#c4c4c4" stroke-width="0.5"/></svg><div class="t" style="left:821.5px;top:328.2px;font-size:6px;color:#ececec;letter-spacing:-0.05px;-webkit-text-stroke:0.18px #ececec">shadow</div><svg class="a" style="left:779px;top:341.5px" width="9" height="6" viewBox="0 0 9 6"><path d="M0.7 3 Q4.5 -0.9 8.3 3 Q4.5 6.9 0.7 3Z" fill="none" stroke="#e8e8e8" stroke-width="1.2"/><circle cx="4.5" cy="3" r="1.25" fill="#e8e8e8"/></svg><svg class="a" style="left:794px;top:342.5px" width="6" height="4" viewBox="0 0 6 4"><path d="M0.6 0.8 L3 3 L5.4 0.8" fill="none" stroke="#c0c0c0" stroke-width="0.8"/></svg><svg class="a" style="left:800px;top:341px" width="8" height="7" viewBox="0 0 8 7"><path d="M0 0.5 H3 L3.8 1.4 H8 V6.5 H0Z" fill="#ececec"/><path d="M0 2.2 H8" stroke="#c4c4c4" stroke-width="0.5"/></svg><div class="t" style="left:812.6px;top:341.7px;font-size:6px;color:#ececec;letter-spacing:0px;-webkit-text-stroke:0.18px #ececec">bg</div><svg class="a" style="left:779px;top:358.8px" width="9" height="6" viewBox="0 0 9 6"><path d="M0.7 3 Q4.5 -0.9 8.3 3 Q4.5 6.9 0.7 3Z" fill="none" stroke="#e8e8e8" stroke-width="1.2"/><circle cx="4.5" cy="3" r="1.25" fill="#e8e8e8"/></svg><div class="a" style="left:802px;top:354px;width:16px;height:15px;background-color:#fff;background-image:linear-gradient(45deg,#d9d9d9 25%,transparent 25%,transparent 75%,#d9d9d9 75%),linear-gradient(45deg,#d9d9d9 25%,transparent 25%,transparent 75%,#d9d9d9 75%);background-size:4px 4px;background-position:0 0,2px 2px"></div><div class="a" style="left:811px;top:362px;width:7px;height:7px;background:#4a4a4a"></div><svg class="a" style="left:811.5px;top:362px" width="7" height="7" viewBox="0 0 7 7"><path d="M1 6 V2 H4 L6 4 V6Z" fill="none" stroke="#ddd" stroke-width="0.7"/></svg><div class="t" style="left:823.2px;top:358.7px;font-size:6px;color:#ececec;letter-spacing:-0.12px;-webkit-text-stroke:0.18px #ececec">PUT texture-background.jpg HERE</div><svg class="a" style="left:779px;top:380px" width="9" height="6" viewBox="0 0 9 6"><path d="M0.7 3 Q4.5 -0.9 8.3 3 Q4.5 6.9 0.7 3Z" fill="none" stroke="#e8e8e8" stroke-width="1.2"/><circle cx="4.5" cy="3" r="1.25" fill="#e8e8e8"/></svg><div class="a" style="left:802px;top:373px;width:18px;height:18px;border:1px dashed #d8d8d8;background:#dcbec4"></div><div class="a" style="left:812px;top:382px;width:8px;height:9px;background:#5e5e5e"></div><div class="a" style="left:813px;top:383.5px;width:5.5px;height:6.5px;border:0.8px solid #ddd"></div><div class="t" style="left:823.2px;top:379.7px;font-size:6px;color:#ececec;letter-spacing:-0.08px;-webkit-text-stroke:0.18px #ececec">Color bg</div><div class="t" style="left:940px;top:378.5px;font-size:7px;font-style:italic;color:#cfcfcf;font-family:'Liberation Serif',serif">fx</div><svg class="a" style="left:950px;top:380px" width="5" height="4" viewBox="0 0 5 4"><path d="M0.5 1 L2.5 3 L4.5 1" stroke="#bdbdbd" stroke-width="0.8" fill="none"/></svg><div class="a" style="left:956.5px;top:198px;width:6px;height:194px;background:#444"></div><div class="a" style="left:957px;top:208px;width:5px;height:183px;background:#5c5c5c;border-radius:1px"></div><svg class="a" style="left:850px;top:393px" width="102" height="13" viewBox="850 393 102 13">
<g stroke="#8e8e8e" fill="none" stroke-width="0.9">
<path d="M856 399.2 H860.5"/><rect x="853.5" y="397.2" width="4.5" height="4" rx="2"/><rect x="858.5" y="397.2" width="4.5" height="4" rx="2"/>
</g>
<text x="869.5" y="402" font-family="Liberation Serif" font-style="italic" font-size="7" fill="#9a9a9a">fx</text>
<rect x="883.5" y="395.7" width="7" height="6.5" fill="#bdbdbd"/><circle cx="887" cy="399" r="1.8" fill="#4a4a4a"/>
<circle cx="902.3" cy="399.2" r="3.1" fill="none" stroke="#9a9a9a" stroke-width="0.9"/><path d="M900 401.5 L904.6 397" stroke="#9a9a9a" stroke-width="1.4"/>
<path d="M912.5 396.5 H915.5 L916.3 397.3 H920 V402.3 H912.5Z" fill="#bdbdbd"/>
<path d="M928 396.5 H934 V402.5 H928Z" fill="none" stroke="#9a9a9a" stroke-width="0.9"/><path d="M931 402.5 V404" stroke="#9a9a9a" stroke-width="0.8"/>
<path d="M942.5 397.5 H947.5 M943.2 397.5 V402.8 H946.8 V397.5 M944 396.5 H946" fill="none" stroke="#8e8e8e" stroke-width="0.9"/>
</svg><div class="a" style="left:775px;top:406.5px;width:188px;height:2px;background:#3a3a3a"></div></div>
<!--/LAYERS-->
<!--DIALOG-->
<div class="a dlg" style="left:0;top:0;width:1024px;height:574px;pointer-events:none">
<div class="a" style="left:460.5px;top:241px;width:285.5px;height:202px;background:#4f4f4f;box-shadow:0 7px 12px rgba(70,25,35,0.28)"></div>
<div class="a" style="left:460.5px;top:241px;width:285.5px;height:11.5px;background:linear-gradient(180deg,#dadada,#c6c6c6);border-bottom:1px solid #9a9a9a"></div>
<div class="t" style="left:563px;top:243.3px;font-size:7px;color:#303030;letter-spacing:0.117px">Color Picker (Solid Color)</div>
<svg class="a" style="left:465.5px;top:270px" width="138" height="137.5" viewBox="0 0 138 137.5" preserveAspectRatio="none">
 <defs>
  <linearGradient id="cfh" x1="0" x2="1"><stop offset="0" stop-color="#fafafa"/><stop offset="0.5" stop-color="#f27590"/><stop offset="1" stop-color="#ec0838"/></linearGradient>
  <linearGradient id="cfv" x1="0" y1="0" x2="0" y2="1"><stop offset="0" stop-color="#000" stop-opacity="0"/><stop offset="0.5" stop-color="#000" stop-opacity="0.55"/><stop offset="1" stop-color="#000" stop-opacity="1"/></linearGradient>
 </defs>
 <rect width="138" height="137.5" fill="url(#cfh)"/>
 <rect width="138" height="137.5" fill="url(#cfv)"/>
 <circle cx="20" cy="10.7" r="3.7" fill="none" stroke="#444" stroke-width="0.8"/>
 <circle cx="20" cy="10.7" r="4.5" fill="none" stroke="#eee" stroke-width="0.5" opacity="0.6"/>
</svg>
<div class="a" style="left:608px;top:270.7px;width:11.6px;height:137.3px;background:linear-gradient(180deg,#ff0000 0%,#ff00ff 16.67%,#0000ff 33.33%,#00ffff 50%,#00ff00 66.67%,#ffff00 83.33%,#ff0000 100%)"></div>
<svg class="a" style="left:603px;top:272px" width="22" height="8" viewBox="0 0 22 8"><path d="M1.5 1.5 L4.5 4 L1.5 6.5Z" fill="#f0f0f0"/><path d="M20 1.5 L17 4 L20 6.5Z" fill="#f0f0f0"/></svg>
<div class="t" style="left:635.5px;top:271.5px;font-size:7px;color:#d6d6d6">new</div>
<div class="a" style="left:626px;top:280px;width:32px;height:18px;background:#e3c4ca"></div>
<div class="a" style="left:626px;top:298px;width:32px;height:18px;background:#ecdfba"></div>
<div class="t" style="left:631px;top:318px;font-size:7px;color:#d6d6d6">current</div>
<svg class="a" style="left:660px;top:299px" width="12" height="18" viewBox="0 0 12 18"><path d="M5 2 L8.5 3.8 V7.5 L5 9.3 L1.5 7.5 V3.8Z" fill="#9a9a9a" stroke="#cfcfcf" stroke-width="0.6"/><path d="M1.5 3.8 L5 5.6 L8.5 3.8 M5 5.6 V9.3" stroke="#cfcfcf" stroke-width="0.5" fill="none"/><rect x="2.5" y="9.5" width="7.5" height="7.5" fill="#e8c8cc" stroke="#d0d0d0" stroke-width="0.6"/></svg>
<div class="a" style="left:678px;top:258.5px;width:63px;height:14px;border-radius:7px;border:1.2px solid #b9b9b9;background:#4f4f4f"></div>
<div class="t" style="left:705px;top:262px;font-size:7px;color:#e6e6e6;letter-spacing:-0.4px">OK</div>
<div class="a" style="left:678px;top:277.7px;width:63px;height:14px;border-radius:7px;border:1px solid #646464;background:#4b4b4b"></div>
<div class="t" style="left:699.4px;top:281.2px;font-size:7px;color:#e6e6e6;letter-spacing:-0.23px">Cancel</div>
<div class="a" style="left:678px;top:300.8px;width:63px;height:14px;border-radius:7px;border:1px solid #646464;background:#4b4b4b"></div>
<div class="t" style="left:684px;top:304.3px;font-size:7px;color:#e6e6e6;letter-spacing:-0.07px">Add to Swatches</div>
<div class="a" style="left:678px;top:323.5px;width:63px;height:14px;border-radius:7px;border:1px solid #646464;background:#4b4b4b"></div>
<div class="t" style="left:687.6px;top:327px;font-size:7px;color:#e6e6e6;letter-spacing:-0.1px">Color Libraries</div>
<div class="a" style="left:626.0px;top:348.9px;width:7px;height:7px;border-radius:50%;background:#f0f0f0"></div><div class="a" style="left:628.0px;top:350.9px;width:3px;height:3px;border-radius:50%;background:#333"></div><div class="t" style="left:635.5px;top:348.59999999999997px;font-size:7px;color:#d8d8d8">H:</div><div class="a" style="left:651px;top:347.9px;width:19.5px;height:9px;background:#414141;border:1px solid #474747"></div><div class="t" style="left:653px;top:348.59999999999997px;font-size:7px;color:#d8d8d8">347</div><div class="t" style="left:673px;top:348.59999999999997px;font-size:7px;color:#d0d0d0">&#176;</div><div class="a" style="left:626.0px;top:361.7px;width:7px;height:7px;border-radius:50%;background:#474747;border:1px solid #5a5a5a"></div><div class="t" style="left:635.5px;top:361.4px;font-size:7px;color:#d8d8d8">S:</div><div class="a" style="left:651px;top:360.7px;width:19.5px;height:9px;background:#414141;border:1px solid #474747"></div><div class="t" style="left:653px;top:361.4px;font-size:7px;color:#d8d8d8">13</div><div class="t" style="left:672.5px;top:361.4px;font-size:7px;color:#d0d0d0">%</div><div class="a" style="left:626.0px;top:374.5px;width:7px;height:7px;border-radius:50%;background:#474747;border:1px solid #5a5a5a"></div><div class="t" style="left:635.5px;top:374.2px;font-size:7px;color:#d8d8d8">B:</div><div class="a" style="left:651px;top:373.5px;width:19.5px;height:9px;background:#414141;border:1px solid #474747"></div><div class="t" style="left:653px;top:374.2px;font-size:7px;color:#d8d8d8">85</div><div class="t" style="left:672.5px;top:374.2px;font-size:7px;color:#d0d0d0">%</div><div class="a" style="left:626.0px;top:389.5px;width:7px;height:7px;border-radius:50%;background:#474747;border:1px solid #5a5a5a"></div><div class="t" style="left:635.5px;top:389.2px;font-size:7px;color:#d8d8d8">R:</div><div class="a" style="left:651px;top:388.5px;width:19.5px;height:9px;background:#414141;border:1px solid #474747"></div><div class="t" style="left:653px;top:389.2px;font-size:7px;color:#d8d8d8">217</div><div class="a" style="left:626.0px;top:402.3px;width:7px;height:7px;border-radius:50%;background:#474747;border:1px solid #5a5a5a"></div><div class="t" style="left:635.5px;top:402.0px;font-size:7px;color:#d8d8d8">G:</div><div class="a" style="left:651px;top:401.3px;width:19.5px;height:9px;background:#414141;border:1px solid #474747"></div><div class="t" style="left:653px;top:402.0px;font-size:7px;color:#d8d8d8">190</div><div class="a" style="left:626.0px;top:415.1px;width:7px;height:7px;border-radius:50%;background:#474747;border:1px solid #5a5a5a"></div><div class="t" style="left:635.5px;top:414.8px;font-size:7px;color:#d8d8d8">B:</div><div class="a" style="left:651px;top:414.1px;width:19.5px;height:9px;background:#414141;border:1px solid #474747"></div><div class="t" style="left:653px;top:414.8px;font-size:7px;color:#d8d8d8">196</div><div class="a" style="left:690.5px;top:348.9px;width:7px;height:7px;border-radius:50%;background:#474747;border:1px solid #5a5a5a"></div><div class="t" style="left:699.5px;top:348.59999999999997px;font-size:7px;color:#d8d8d8">L:</div><div class="a" style="left:708.8px;top:347.9px;width:23px;height:9px;background:#414141;border:1px solid #474747"></div><div class="t" style="left:710.8px;top:348.59999999999997px;font-size:7px;color:#d8d8d8">79</div><div class="a" style="left:690.5px;top:361.7px;width:7px;height:7px;border-radius:50%;background:#474747;border:1px solid #5a5a5a"></div><div class="t" style="left:699.5px;top:361.4px;font-size:7px;color:#d8d8d8">a:</div><div class="a" style="left:708.8px;top:360.7px;width:23px;height:9px;background:#414141;border:1px solid #474747"></div><div class="t" style="left:710.8px;top:361.4px;font-size:7px;color:#d8d8d8">11</div><div class="a" style="left:690.5px;top:374.5px;width:7px;height:7px;border-radius:50%;background:#474747;border:1px solid #5a5a5a"></div><div class="t" style="left:699.5px;top:374.2px;font-size:7px;color:#d8d8d8">b:</div><div class="a" style="left:708.8px;top:373.5px;width:23px;height:9px;background:#414141;border:1px solid #474747"></div><div class="t" style="left:710.8px;top:374.2px;font-size:7px;color:#d8d8d8">1</div><div class="t" style="left:699.5px;top:389.2px;font-size:7px;color:#d8d8d8">C:</div><div class="a" style="left:708.8px;top:388.5px;width:18.5px;height:9px;background:#414141;border:1px solid #474747"></div><div class="t" style="left:710.8px;top:389.2px;font-size:7px;color:#d8d8d8">14</div><div class="t" style="left:730px;top:389.2px;font-size:7px;color:#d0d0d0">%</div><div class="t" style="left:698.5px;top:402.0px;font-size:7px;color:#d8d8d8">M:</div><div class="a" style="left:708.8px;top:401.3px;width:18.5px;height:9px;background:#414141;border:1px solid #474747"></div><div class="t" style="left:710.8px;top:402.0px;font-size:7px;color:#d8d8d8">25</div><div class="t" style="left:730px;top:402.0px;font-size:7px;color:#d0d0d0">%</div><div class="t" style="left:699.5px;top:414.8px;font-size:7px;color:#d8d8d8">Y:</div><div class="a" style="left:708.8px;top:414.1px;width:18.5px;height:9px;background:#414141;border:1px solid #474747"></div><div class="t" style="left:710.8px;top:414.8px;font-size:7px;color:#d8d8d8">15</div><div class="t" style="left:730px;top:414.8px;font-size:7px;color:#d0d0d0">%</div><div class="t" style="left:699.5px;top:427.8px;font-size:7px;color:#d8d8d8">K:</div><div class="a" style="left:708.8px;top:427.1px;width:18.5px;height:9px;background:#414141;border:1px solid #474747"></div><div class="t" style="left:710.8px;top:427.8px;font-size:7px;color:#d8d8d8">0</div><div class="t" style="left:730px;top:427.8px;font-size:7px;color:#d0d0d0">%</div>
<div class="t" style="left:626.5px;top:429.8px;font-size:7px;color:#cfcfcf">#</div>
<div class="a" style="left:632px;top:428.7px;width:48.3px;height:10px;background:#3f3f3f;border:1px solid #46526a"></div>
<div class="a" style="left:633px;top:429.5px;width:25px;height:8.5px;background:#2b5d9e"></div>
<div class="t" style="left:634px;top:429.8px;font-size:7px;color:#f2f2f2">d9bec4</div>
<div class="a" style="left:465px;top:416.5px;width:6.7px;height:6.5px;border:1px solid #6c6c6c;background:#454545;border-radius:1px"></div>
<div class="t" style="left:475px;top:415.8px;font-size:7px;color:#e0e0e0;letter-spacing:-0.185px">Only Web Colors</div>
</div>
<!--/DIALOG-->
</body></html>
